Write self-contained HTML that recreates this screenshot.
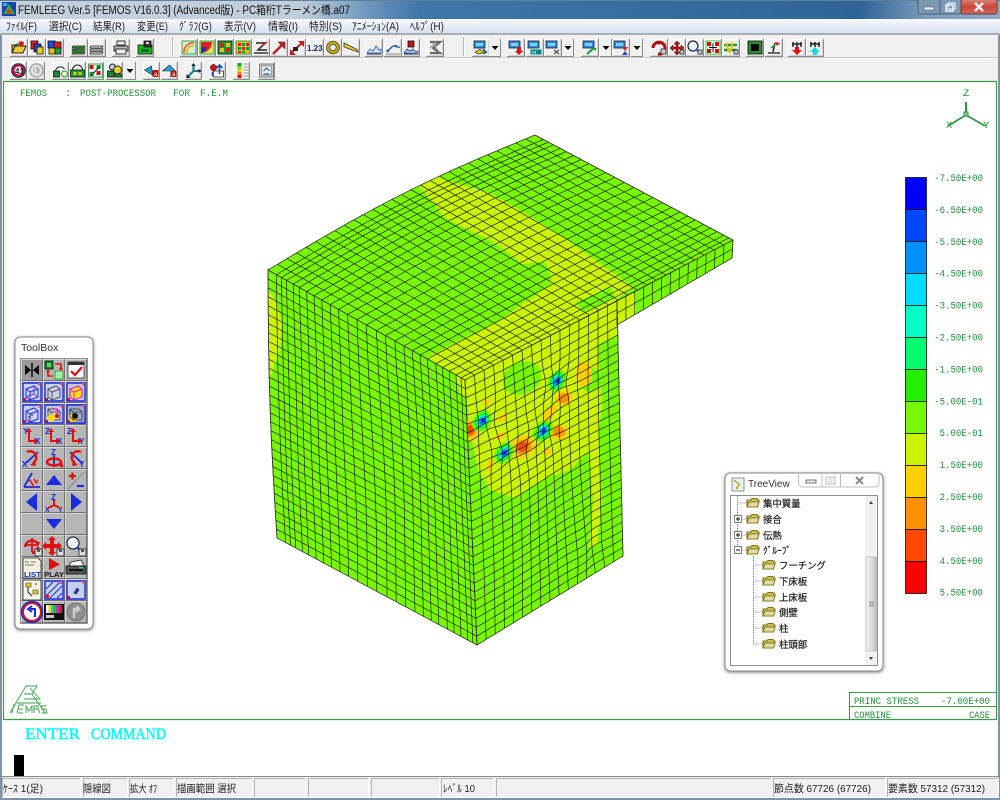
<!DOCTYPE html>
<html><head><meta charset="utf-8"><title>FEMLEEG</title>
<style>
html,body{margin:0;padding:0;background:#fff}
body{width:1000px;height:800px;overflow:hidden;position:relative}
svg{position:absolute;left:0;top:0;display:block}
text{font-family:"Liberation Sans","Noto Sans CJK JP",sans-serif}
.m{font-size:11px;fill:#222}
.g{font-family:"Liberation Mono",monospace;font-size:10.5px;fill:#23903a}
.s{font-size:10.5px;fill:#222}
.t{font-size:9.4px;fill:#222;stroke:#222;stroke-width:.22}
</style></head><body>
<svg width="1000" height="800" viewBox="0 0 1000 800" xmlns="http://www.w3.org/2000/svg">
<defs>
<linearGradient id="tb" x1="0" x2="1" y1="0" y2="0">
<stop offset="0" stop-color="#c3d0dc"/><stop offset=".3" stop-color="#c0cedb"/><stop offset=".37" stop-color="#6b95bc"/><stop offset=".42" stop-color="#3f75a9"/><stop offset=".86" stop-color="#2f6498"/><stop offset=".93" stop-color="#7f9fbd"/><stop offset="1" stop-color="#8ea9c2"/>
</linearGradient>
<linearGradient id="mn" x1="0" x2="0" y1="0" y2="1"><stop offset="0" stop-color="#f7f8fc"/><stop offset="1" stop-color="#d9e1f1"/></linearGradient>
<linearGradient id="cl" x1="0" x2="0" y1="0" y2="1"><stop offset="0" stop-color="#d98a80"/><stop offset=".5" stop-color="#c9463a"/><stop offset="1" stop-color="#cf6a5e"/></linearGradient>
<linearGradient id="sb" x1="0" x2="1" y1="0" y2="0"><stop offset="0" stop-color="#f4f4f4"/><stop offset=".5" stop-color="#dcdcdc"/><stop offset="1" stop-color="#bdbdbd"/></linearGradient>
<filter id="sh" x="-10%" y="-10%" width="120%" height="120%"><feDropShadow dx="0" dy="1" stdDeviation="1.5" flood-color="#000" flood-opacity=".5"/></filter>
</defs>

<!-- window frame -->
<rect width="1000" height="800" fill="#7f93a8"/>
<rect width="1000" height="19" fill="url(#tb)"/>
<rect x="0" y="0" width="1000" height="1" fill="#5f7f9f"/>
<rect x="2" y="2" width="14" height="14" fill="#1c3fa8"/>
<path d="M3 14L9 4l6 10z" fill="#2fae3c"/><path d="M6 13l3-5 3 5z" fill="#e33"/><path d="M3 3h4v3H3z" fill="#1fb6e8"/>
<text x="18" y="14" font-size="11.5" fill="#111" textLength="332" lengthAdjust="spacingAndGlyphs">FEMLEEG Ver.5 [FEMOS V16.0.3] (Advanced版) - PC箱桁Tラーメン橋.a07</text>
<!-- caption buttons -->
<rect x="918" y="-1" width="43" height="15" rx="2" fill="#7d98b3" stroke="#4a6078"/>
<path d="M940 0v14" stroke="#4a6078"/>
<rect x="961" y="-1" width="36" height="15" rx="2" fill="url(#cl)" stroke="#6a4040"/>
<rect x="924" y="7" width="10" height="3" fill="#e8eef4" stroke="#506070" stroke-width=".6"/>
<rect x="946" y="5" width="7" height="6" fill="none" stroke="#e8eef4" stroke-width="1.6"/><rect x="948" y="3" width="7" height="6" fill="none" stroke="#e8eef4" stroke-width="1.2"/>
<path d="M975 3l8 8M983 3l-8 8" stroke="#f4f4f4" stroke-width="2.4"/>

<!-- menu -->
<rect x="0" y="19" width="1000" height="14" fill="url(#mn)"/>
<rect x="0" y="33" width="1000" height="2" fill="#a9adb4"/>
<g>
<text class="m" x="6" y="30" textLength="31" lengthAdjust="spacingAndGlyphs">ﾌｧｲﾙ(F)</text>
<text class="m" x="49" y="30" textLength="33" lengthAdjust="spacingAndGlyphs">選択(C)</text>
<text class="m" x="93" y="30" textLength="32" lengthAdjust="spacingAndGlyphs">結果(R)</text>
<text class="m" x="137" y="30" textLength="31" lengthAdjust="spacingAndGlyphs">変更(E)</text>
<text class="m" x="179" y="30" textLength="33" lengthAdjust="spacingAndGlyphs">ｸﾞﾗﾌ(G)</text>
<text class="m" x="224" y="30" textLength="32" lengthAdjust="spacingAndGlyphs">表示(V)</text>
<text class="m" x="268" y="30" textLength="30" lengthAdjust="spacingAndGlyphs">情報(I)</text>
<text class="m" x="309" y="30" textLength="33" lengthAdjust="spacingAndGlyphs">特別(S)</text>
<text class="m" x="352" y="30" textLength="47" lengthAdjust="spacingAndGlyphs">ｱﾆﾒｰｼｮﾝ(A)</text>
<text class="m" x="410" y="30" textLength="34" lengthAdjust="spacingAndGlyphs">ﾍﾙﾌﾟ(H)</text>
</g>

<!-- toolbars -->
<rect x="2" y="35" width="996" height="46" fill="#f0f0f0"/>
<rect x="2" y="57" width="996" height="1" fill="#c6c6c6"/><rect x="2" y="58" width="996" height="1" fill="#fff"/>
<path d="M172.5 37v19M463.5 37v19" stroke="#bbb"/><path d="M173.5 37v19M464.5 37v19" stroke="#fff"/>
<g id="tools"></g>

<!-- canvas -->
<rect x="2" y="81" width="996" height="696" fill="#fff"/>
<path d="M3.5 81.5H996.5V719.5H3.5z" fill="none" stroke="#3f9a4c" stroke-width="1.2"/>
<g id="mesh"></g>
<text class="g" x="20" y="96" textLength="27" lengthAdjust="spacingAndGlyphs">FEMOS</text><text class="g" x="65" y="96">:</text>
<text class="g" x="80" y="96" textLength="76" lengthAdjust="spacingAndGlyphs">POST-PROCESSOR</text><text class="g" x="173" y="96" textLength="17" lengthAdjust="spacingAndGlyphs">FOR</text><text class="g" x="200" y="96" textLength="28" lengthAdjust="spacingAndGlyphs">F.E.M</text>

<!-- axis -->
<g stroke="#2a9a42" fill="none">
<path d="M966 102v14" stroke-width="2"/><path d="M966 115l-18 11M966 115l19 11" stroke-width="1.7"/>
<rect x="964" y="112" width="4" height="4" fill="#8fc79a"/>
</g>
<text class="g" x="963" y="96">Z</text><text class="g" x="946" y="128">X</text><text class="g" x="983" y="128">Y</text>

<!-- legend -->
<g id="leg"></g>

<!-- FEMOS logo -->
<g fill="none" stroke="#3aa04a" stroke-width=".9">
<path d="M10 713L26 686h11l-5 8h-8M30 688l10 11h-16M32 694l13 19M17 703h24M14 704l-2 9"/>
<path d="M17 713l2-8h5M18 709h5M18 713h5M26 713v-7l3 5 3-5v7M34 713v-7h4v3h-4M38 709l2 4M42 713h5l-1-4h-4l-1-3h5"/>
</g>

<!-- info box -->
<path d="M849.5 719V692.5H997M849.5 706.5H997" fill="none" stroke="#3f9a4c"/>
<text class="g" x="854" y="704" textLength="65" lengthAdjust="spacingAndGlyphs">PRINC STRESS</text><text class="g" x="941" y="704" textLength="49" lengthAdjust="spacingAndGlyphs">-7.00E+00</text>
<text class="g" x="854" y="718" textLength="37" lengthAdjust="spacingAndGlyphs">COMBINE</text><text class="g" x="969" y="718" textLength="21" lengthAdjust="spacingAndGlyphs">CASE</text>

<!-- command -->
<text x="25" y="739" font-size="15.5" fill="#00ffff" stroke="#00ffff" stroke-width=".5" style="font-family:'Liberation Serif',serif" textLength="55" lengthAdjust="spacingAndGlyphs">ENTER</text>
<text x="91" y="739" font-size="15.5" fill="#00ffff" stroke="#00ffff" stroke-width=".5" style="font-family:'Liberation Serif',serif" textLength="75" lengthAdjust="spacingAndGlyphs">COMMAND</text>
<rect x="14" y="755" width="10" height="21" fill="#000"/>

<!-- status -->
<rect x="0" y="776" width="1000" height="1.5" fill="#8a8a8a"/>
<rect x="2" y="777" width="996" height="21" fill="#f0f0f0"/>
<g id="stat"></g>
<text class="s" x="3" y="792" textLength="40" lengthAdjust="spacingAndGlyphs">ｹｰｽ 1(足)</text>
<text class="s" x="83" y="792" textLength="28" lengthAdjust="spacingAndGlyphs">隠線図</text>
<text class="s" x="130" y="792" textLength="27" lengthAdjust="spacingAndGlyphs">拡大 ｵﾌ</text>
<text class="s" x="177" y="792" textLength="59" lengthAdjust="spacingAndGlyphs">描画範囲 選択</text>
<text class="s" x="443" y="792" textLength="32" lengthAdjust="spacingAndGlyphs">ﾚﾍﾞﾙ 10</text>
<text class="s" x="774" y="792" textLength="97" lengthAdjust="spacingAndGlyphs">節点数 67726 (67726)</text>
<text class="s" x="888" y="792" textLength="97" lengthAdjust="spacingAndGlyphs">要素数 57312 (57312)</text>

<!-- toolbox -->
<rect x="15" y="337" width="78" height="292" rx="5" fill="#fff" stroke="#8a8a8a" filter="url(#sh)"/>
<text x="21" y="351" font-size="10.5" fill="#333">ToolBox</text>
<g id="box"></g>

<!-- tree view -->
<rect x="725" y="473" width="158" height="198" rx="5" fill="#fff" stroke="#8a8a8a" filter="url(#sh)"/>
<path d="M798.5 473v10a4 4 0 0 0 4 4H875a4 4 0 0 0 4-4V473M840.5 473v14M822 473v14" fill="none" stroke="#b8bcc2"/>
<rect x="806" y="480" width="10" height="3" fill="#eee" stroke="#555" stroke-width=".8"/>
<rect x="826" y="477" width="9" height="7" fill="none" stroke="#bbb"/><rect x="829" y="479" width="3" height="3" fill="none" stroke="#ccc"/>
<path d="M856 477l7 7M863 477l-7 7" stroke="#888" stroke-width="2"/>
<rect x="732" y="478" width="12" height="13" fill="#e8f4f4" stroke="#7a9a9a"/><path d="M735 481l4 3-2 4" stroke="#a08a10" fill="none"/><circle cx="735" cy="481" r="1.2" fill="#c8b020"/><circle cx="739" cy="484.500" r="1.2" fill="#c8b020"/><circle cx="737" cy="488" r="1.200" fill="#c8b020"/>
<text x="748" y="487" font-size="10" fill="#333">TreeView</text>
<rect x="730.500" y="495.500" width="147" height="170" fill="#fff" stroke="#8f8f8f"/>
<rect x="865" y="496" width="12" height="169" fill="#f0f0f0"/>
<rect x="866" y="557" width="11" height="94" rx="1" fill="url(#sb)" stroke="#aaa" stroke-width=".6"/>
<path d="M869 602h5M869 604h5M869 606h5" stroke="#777" stroke-width=".8"/>
<path d="M871 501l-2 3h4zM871 660l-2-3h4z" fill="#444"/>
<g id="tree"></g>
<text class="t" x="763" y="507">集中質量</text>
<text class="t" x="763" y="523">接合</text>
<text class="t" x="763" y="539">伝熱</text>
<text class="t" x="763" y="554">ｸﾞﾙｰﾌﾟ</text>
<text class="t" x="779" y="569">フーチング</text>
<text class="t" x="779" y="585">下床板</text>
<text class="t" x="779" y="601">上床板</text>
<text class="t" x="779" y="616">側壁</text>
<text class="t" x="779" y="632">柱</text>
<text class="t" x="779" y="648">柱頭部</text>
</svg>
<script>
(function(){
var $=function(id){return document.getElementById(id)};
/* ---------- primitives ---------- */
function R(x,y,w,h,f,s){return '<rect x="'+x+'" y="'+y+'" width="'+w+'" height="'+h+'" fill="'+f+'"'+(s?' stroke="'+s+'" stroke-width=".8"':'')+'/>'}
function P(d,f,s,w){return '<path d="'+d+'" fill="'+(f||'none')+'"'+(s?' stroke="'+s+'" stroke-width="'+(w||1)+'"':'')+'/>'}
function C(x,y,r,f,s,w){return '<circle cx="'+x+'" cy="'+y+'" r="'+r+'" fill="'+(f||'none')+'"'+(s?' stroke="'+s+'" stroke-width="'+(w||1)+'"':'')+'/>'}

/* ---------- toolbar icons (16x15 box) ---------- */
var blueScr=R(1,1,11,7,'#2f8be0','#123')+R(3,3,7,3,'#7fd0ff');
var stack=function(c){return P('M2 6h12l-1 2H1zM2 9h12l-1 2H1zM2 12h12l-1 2H1z',c,'#222',.8)};
var I={
open:P('M1 13V5h4l1-1h6v2',"#d8b020",'#222')+P('M1 13l3-7h11l-3 7z','#f0c830','#222')+P('M8 1l5 1-1 4-3 0z','#d01818'),
pg:R(2,1,7,8,'#e02020','#111')+R(5,4,7,8,'#2040d0','#111')+R(8,7,6,7,'#e8d020','#111'),
pg2:R(1,1,7,7,'#2050e0','#111')+R(7,2,7,6,'#e02020','#111')+R(2,8,6,6,'#e8c020','#111')+R(8,8,6,6,'#20a040','#111'),
st1:stack('#28b028'),st2:stack('#e0e0e0'),
pr:P('M4 1h8v4H4z','#eee','#333')+P('M1 6h14v5H1z','#bbb','#333')+P('M3 9h10v5H3z','#eee','#333'),
sv:R(1,5,14,9,'#10c010','#111')+R(7,1,7,6,'#333','#111')+R(9,2,3,2,'#ddd')+R(4,9,8,3,'#063'),
c1:R(1,1,14,13,'#d8ecd0','#1a8a30')+P('M3 13a9 9 0 0 1 10-10','none','#e06020',1.6)+P('M6 13a6 6 0 0 1 7-7','none','#e8b020',1.6),
c2:R(1,1,14,13,'#d8e860','#1a8a30')+P('M2 13V2h11a11 11 0 0 1-11 11z','#e02020')+P('M2 13V7h5a5 5 0 0 1-5 6z','#2030c0'),
c3:R(1,1,14,13,'#10a030','#111')+R(3,3,4,4,'#e02020')+R(9,3,4,4,'#e8c020')+R(3,8,4,4,'#e8c020')+R(9,8,4,4,'#e02020'),
c4:R(1,1,14,13,'#e8c020','#1a8a30')+R(3,3,3,3,'#e02020')+R(7,3,3,3,'#10a030')+R(11,3,3,3,'#e02020')+R(3,7,3,3,'#10a030')+R(7,7,3,3,'#e02020')+R(11,7,3,3,'#10a030')+R(3,11,3,2,'#e02020')+R(7,11,3,2,'#10a030'),
zz:P('M3 3h9L5 10h9','none','#222',1.5)+P('M1 13h14','none','#333',1.5)+P('M9 6l5-4','none','#c02020',1.5),
ar:P('M2 14L12 4','none','#c02020',2.4)+P('M7 2h7v7z','#c02020','#222',.5),
ar2:P('M2 13L14 2','none','#c02020',2)+R(4,7,5,4,'#222')+P('M9 1h6v6zM1 9v6h6z','#c02020'),
n123:'<text x="0" y="11" font-size="8" font-weight="bold" fill="#1a2a70">1.23</text>',
ring:C(8,7.500,5,'none','#b8a810',3)+C(8,7.500,6.500,'none','#222',.6)+C(8,7.500,3.200,'none','#222',.6),
horn:P('M1 3L15 10v2L1 7z','#e8d030','#333',.8),
g1:P('M1 13l3-4 3 2 3-5 3 4 2-1v4z','#cfe0f0','#3060b0',.8)+P('M1 14h14','none','#333'),
g2:P('M1 11c4 0 5-5 8-5s3 2 6 1','none','#3060a0',1.4)+C(3,11,1.300,'#3060a0')+C(11,6,1.300,'#3060a0')+P('M1 14h14','none','#888'),
g3:R(5,1,6,6,'#c01818','#111')+P('M1 13l3-4 3 2 3-2 3 3 2-1v3z','#9ab8e0','#2050a0',.8)+P('M1 14h14','none','#333'),
ss:P('M3 2h10L6 8l7 5H3','none','#666',2.200)+P('M5 2l8 11M9 2L3 8','none','#999',1),
sc:blueScr+P('M2 12l5-3 3 4-5 1z','#e8c820','#222',.6)+P('M10 9l4 3-3 2z','#20a040','#222',.6),
scd:blueScr+P('M9 7h4v4h2l-4 4-4-4h2z','#e01010'),
scm:blueScr+P('M4 10h10v4H4z','#088','#088')+'<text x="5" y="14" font-size="5" fill="#fff">m</text>',
scl:blueScr+P('M9 10l5 4M14 10l-5 4','none','#555',1.400),
scg:blueScr+P('M5 14L12 8','none','#1a9a30',2)+P('M10 8h4v3z','#1a9a30'),
scr:blueScr+P('M9 7h6l-3 4 3 4H9l3-4z','#1850c0')+P('M9 7h6l-3 4z','#e02020'),
ro:P('M2 8a6 6 0 1 1 5 6','none','#b01010',3)+P('M4 3l4-2 1 4z','#b01010')+R(10,9,5,5,'#ccc','#222'),
mv:P('M8 1l3 3H9v3h3V5l3 3-3 3V9H9v3h2l-3 3-3-3h2V9H4v2L1 8l3-3v2h3V4H5z','#c01010','#311',.5)+R(11,10,4,4,'#ccc','#222'),
mg:C(6,6,5,'#e8f0ff','#222',1.200)+P('M9 9l3 3','none','#2060c0',2)+R(11,10,4,4,'#ccc','#222'),
fit:R(1,1,14,13,'#fff','#10c010')+R(2,2,4,4,'#d01010')+R(10,2,4,4,'#d01010')+R(2,9,4,4,'#d01010')+R(10,9,4,4,'#d01010')+P('M8 3v9M4 7.500h8','none','#111'),
sel:P('M1 5h13M1 10h13','none','#1a9a30',2.600)+P('M3 3l3 9M10 2l-3 11','none','#e8c020',2)+R(11,10,4,4,'#ccc','#222'),
blk:R(1,1,14,13,'#2a8a30','#111')+R(4,4,8,7,'#000'),
flg:P('M7 12L9 3','none','#222',1.500)+P('M9 2l5 1-3 3z','#d01818')+P('M2 13h12','none','#666',2)+P('M5 8l4-3','none','#1a9a30',1.500),
upd:P('M3 4h10M4 2v5M8 2v5M12 2v5','none','#222',1.500)+P('M6 7h4v3h3l-5 5-5-5h3z','#e01010'),
upc:P('M3 4h10M4 2v5M8 2v5M12 2v5','none','#222',1.500)+P('M6 15h4v-3h3L8 7l-5 5h3z','#10d8e8'),
a41:C(8,7.500,7,'#2838c0','#111',.6)+C(8,7.500,5,'#fff','#d01010',2)+'<text x="4.500" y="11" font-size="8" font-weight="bold" fill="#223">41</text>',
gp:C(8,7.500,7,'#b8b8b8','#999',.6)+C(8,7.500,4.500,'none','#e4e4e4',2)+P('M7 5v6','none','#e4e4e4',1.600),
h1:P('M3 8a5 5 0 0 1 9-2','none','#222')+R(1,8,6,6,'#1a8a30','#111')+C(12,11,3,'#e8ffe0','#1a9a30'),
h2:P('M3 7a5 5 0 0 1 10 0','none','#222')+R(1,7,14,7,'#10a030','#111')+R(4,9,3,3,'#e8c020')+R(9,9,3,3,'#e8c020'),
h3:R(1,1,14,13,'#eee','#1a8a30')+R(2,2,4,4,'#d01010')+R(9,8,4,4,'#d01010')+R(2,9,4,4,'#10a030')+R(9,2,4,4,'#10a030')+P('M3 13L13 3','none','#222'),
h4:C(6,4,3,'#ccc','#222')+R(1,8,6,6,'#1a8a30','#111')+C(11,7,4,'#e8d020','#222')+R(8,11,7,3,'#1a8a30','#111'),
c5:P('M1 7l7-4 1 9z','#18a8d8','#222',.6)+P('M9 7h6v7H9z','#c01010')+'<text x="10.500" y="13" font-size="6" fill="#fff">a</text>',
c6:P('M1 8l7-6 6 6z','#18a8d8','#222',.6)+P('M9 8h6v6H9z','#c01010')+'<text x="10.500" y="13" font-size="6" fill="#fff">a</text>',
axs:P('M8 8V1M8 8L2 14M8 8h7','none','#1a7a80',2)+P('M6 3l2-3 2 3zM13 6l3 2-3 2zM1 11l0 4 4 0z','#114'),
hm:R(4,8,10,6,'#fff','#333')+P('M1 3l3-2 3 2 0 3-3 3-3-3z','#d01010','#222',.5)+P('M10 11V3M7 5l3-3 3 3','none','#1050c0',1.600)+P('M3 13v-4','none','#1050c0',1.500),
lg:R(4,0,4,3,'#10a030')+R(4,3,4,3,'#70e010')+R(4,6,4,3,'#e8d020')+R(4,9,4,3,'#f08010')+R(4,12,4,3,'#e01010')+P('M10 1h5M10 4h5M10 7h5M10 10h5M10 13h5','none','#999'),
gs:R(1,1,14,13,'#ccc','#666')+R(3,3,10,9,'#eee','#888')+P('M5 8l3-3 3 3M5 11h6','none','#3070b0',1.300)
};
var b=[];
function btn(x,w,y,k){
  b.push('<g transform="translate('+x+','+y+')">'+R(0,0,w,18,'#f0f0f0')+P('M.5 17V.5H'+(w-.5),'none','#fff')+P('M0 17.500H'+w+'M'+(w-.5)+' 0V18','none','#8c8c8c')+P('M1 16.500H'+(w-1.5)+'V1','none','#d2d2d2')+'<g transform="translate('+(w/2-8)+',1)">'+(I[k]||'')+'</g></g>');
}
function dd(x,y){b.push('<g transform="translate('+x+','+y+')">'+R(0,0,12,18,'#f0f0f0')+P('M0 17.500H12M11.500 0V18','none','#8c8c8c')+P('M2.500 7h7L6 11z','#000')+'</g>')}
[[10,'open'],[28,'pg'],[46,'pg2'],[70,'st1'],[88,'st2'],[112,'pr'],[136,'sv'],[180,'c1'],[198,'c2'],[216,'c3'],[234,'c4'],[252,'zz'],[270,'ar'],[288,'ar2'],[306,'n123'],[324,'ring'],[342,'horn'],[365,'g1'],[384,'g2'],[402,'g3'],[426,'ss'],[472,'sc'],[507,'scd'],[526,'scm'],[544,'scl'],[581,'scg'],[612,'scr'],[650,'ro'],[668,'mv'],[686,'mg'],[704,'fit'],[722,'sel'],[746,'blk'],[765,'flg'],[788,'upd'],[806,'upc']].forEach(function(a){btn(a[0],18,39,a[1])});
[489,562,600,631].forEach(function(x){dd(x,39)});
[[10,'a41'],[28,'gp'],[52,'h1'],[69,'h2'],[87,'h3'],[106,'h4'],[143,'c5'],[161,'c6'],[185,'axs'],[209,'hm'],[233,'lg'],[258,'gs']].forEach(function(a){btn(a[0],17,62,a[1])});
dd(124,62);
$('tools').innerHTML=b.join('');

/* ---------- status panels ---------- */
var st='';[[2,80],[83,127],[129,173],[176,252],[254,305],[308,368],[371,439],[441,493],[496,771],[773,885],[887,998]].forEach(function(a){
 st+=P('M'+(a[0]+.5)+' 797V778.500H'+a[1],'none','#b4b4b4')+P('M'+a[1]+'.5 778V797.500H'+a[0],'none','#fff');});
$('stat').innerHTML=st;

/* ---------- legend ---------- */
var cols=['#0000ff','#0048ff','#0090ff','#00dcff','#00ffc4','#00ff70','#22ee00','#78f800','#ccf400','#ffd000','#ff9000','#ff4800','#ff0000'];
var labs=['-7.50E+00','-6.50E+00','-5.50E+00','-4.50E+00','-3.50E+00','-2.50E+00','-1.50E+00','-5.00E-01','5.00E-01','1.50E+00','2.50E+00','3.50E+00','4.50E+00','5.50E+00'];
var lg='';
cols.forEach(function(c,i){lg+=R(905.5,177.5+i*32,21,32,c,'#111')});
labs.forEach(function(t,i){var w=t.length*5.42;lg+='<text class="g" x="'+(983-w)+'" y="'+(181+i*31.9)+'" textLength="'+w+'" lengthAdjust="spacingAndGlyphs">'+t+'</text>'});
$('leg').innerHTML=lg;

/* ---------- mesh ---------- */
var A=[268,270],B=[535,135],Cc=[733,240],F=[465,380],G=[477,645],H=[277,538],T=[617,301],Rr=[623,556];
function bil(p,u,v){var a=(1-u)*(1-v),b=u*(1-v),c=u*v,d=(1-u)*v;return [a*p[0][0]+b*p[1][0]+c*p[2][0]+d*p[3][0],a*p[0][1]+b*p[1][1]+c*p[2][1]+d*p[3][1]]}
var vs=[25,50,65,80,100,118,140,162,185,210,235,262,290,318,348,375,403,430,455,478,500,525,545,565,585,600,612].map(function(z){return (z-25)/587});
function top_(u,v){var q=bil([A,B,Cc,F],u,v);q[1]-=8*Math.sin(Math.PI*u)*(1-v);return q}
function left_(u,v){var q=bil([A,F,G,H],u,v);
 q[0]+=-2.5*Math.sin(Math.PI*v)*(1-u)+3*Math.sin(Math.PI*v)*Math.sin(Math.PI*u);
 q[0]+=1.2*Math.sin(u*9+v*4)*Math.sin(Math.PI*v)*Math.sin(Math.PI*u);return q}
var hots=[[557,381,.55,11],[482,421,.55,11],[504,453,.55,11],[543,431,.55,11],[522,446,.2,9]];
function right_(u,v){var q=bil([F,T,Rr,G],u,v);
 var ox=q[0],oy=q[1],eb=Math.min(1,u*7)*Math.min(1,(1-u)*7);
 hots.forEach(function(h){var dx=h[0]-ox,dy=h[1]-oy,e=Math.exp(-(dx*dx+dy*dy)/(2*h[3]*h[3]))*eb;q[0]+=dx*h[2]*e;q[1]+=dy*h[2]*e});
 q[0]+=4*Math.sin(Math.PI*u*2)*Math.sin(Math.PI*v)*.8;
 q[1]+=4*Math.sin(Math.PI*v*3)*Math.sin(Math.PI*u)*Math.max(0,.8-v);
 var fd=ox-590,w=Math.exp(-fd*fd/150)*Math.max(0,(oy-470)/85);q[0]-=fd*.55*Math.min(w,1)*Math.min(1,(1-v)*10);
 return q}
var sl0=[617,301],sl1=[733,240],sl2=[732,258],sl3=[617,325];
function slab(u,v){return bil([sl0,sl1,sl2,sl3],u,v)}
function fmt(q){return q[0].toFixed(1)+' '+q[1].toFixed(1)}
function lines(fn,us,vv){var d='';
 us.forEach(function(u){var s=[];for(var k=0;k<=40;k++){s.push(fmt(fn(u,k/40)))}d+='M'+s.join('L')});
 vv.forEach(function(v){var s=[];for(var k=0;k<=60;k++){s.push(fmt(fn(k/60,v)))}d+='M'+s.join('L')});
 return d}
function outline(fn,n){var s=[],i;for(i=0;i<=n;i++)s.push(fmt(fn(i/n,0)));for(i=0;i<=n;i++)s.push(fmt(fn(1,i/n)));for(i=n;i>=0;i--)s.push(fmt(fn(i/n,1)));for(i=n;i>=0;i--)s.push(fmt(fn(0,i/n)));return 'M'+s.join('L')+'z'}
function lin(n){var a=[];for(var i=0;i<=n;i++)a.push(i/n);return a}
var oT=outline(top_,60),oL=outline(left_,60),oR=outline(right_,80),oS=outline(slab,20);
var Y='#ccf400',GR='#78f800',O='#ffd000',OR='#ff9000',RD='#ff4800';
function E(x,y,rx,ry,f,rot){return '<ellipse cx="'+x+'" cy="'+y+'" rx="'+rx+'" ry="'+ry+'" fill="'+f+'"'+(rot?' transform="rotate('+rot+' '+x+' '+y+')"':'')+'/>'}
function blue(x,y,rot,s){s=s||1;return E(x,y,13*s,10*s,GR,rot)+E(x,y,10*s,7*s,'#22ee00',rot)+E(x,y,8.500*s,5.800*s,'#00ff70',rot)+E(x,y,7.500*s,5*s,'#00ffc4',rot)+E(x,y,6.500*s,4.500*s,'#00dcff',rot)+E(x+.5,y,4.500*s,3.400*s,'#0090ff',rot)+E(x+1,y,2.600*s,2.200*s,'#0030ff',rot)}
function hot(x,y,r,ro){var s=E(x,y,r*1.300,r*1.100,O,ro);if(r>5)s+=E(x,y,r*.85,r*.7,OR,ro);if(r>8)s+=E(x,y,r*.55,r*.45,RD,ro);return s}
var m='<clipPath id="ct"><path d="'+oT+'"/></clipPath><clipPath id="cl_"><path d="'+oL+'"/></clipPath><clipPath id="cr"><path d="'+oR+'"/></clipPath><clipPath id="cs"><path d="'+oS+'"/></clipPath>';
/* top */
m+='<path d="'+oT+'" fill="'+GR+'"/><g clip-path="url(#ct)">'
 +P('M420 187L437 177L490 193L520 210L563 237L633 287L600 312L465 384L427 357L500 320L528 300L552 284L520 262L495 243L445 218z',Y)
 +P('M522 264L545 262L552 280L530 290z',GR)+P('M575 303L610 287L615 297L585 312z',GR)
 +'</g>';
/* left */
m+='<path d="'+oL+'" fill="'+GR+'"/><g clip-path="url(#cl_)">'
 +P('M262 293L272 293L282 320L280 350L270 378z',Y)
 +P('M455 372L470 382L470 405L460 392z',Y)
 +'</g>';
/* right */
m+='<path d="'+oR+'" fill="'+GR+'"/><g clip-path="url(#cr)">'
 +P('M465 380L617 301L617 335L598 345L602 405L598 440L570 470L545 478L515 498L490 490L478 470L470 430z',Y)
 +E(522,378,20,16,GR,-25)
 +E(590,380,11,12,GR,0)
 +P('M586 430L598 425L602 500L597 545L589 548L593 500z',Y)
 +E(584,374,8,13,O,0)
 +hot(564,398,7,-20)+E(550,413,10,4.500,O,-50)
 +hot(559,432,7,0)+hot(523,447,10,-30)+hot(470,430,9,-65)
 +E(487,402,4,3,O,-40)+E(502,418,6,3.500,O,-30)+E(500,436,6,3.500,O,-30)+E(490,465,3.500,6,O,20)+E(548,452,5,3.500,O,0)
 +blue(557,381,-60,.9)+blue(482,421,-55,.9)+blue(504,453,-55,.9)+blue(543,431,-50,.9)
 +'</g>';
/* slab front */
m+='<path d="'+oS+'" fill="'+GR+'"/><g clip-path="url(#cs)">'+P('M617 301L636 290L636 316L617 325z',Y)+'</g>';
/* grid */
function grid(d){return '<path d="'+d+'" fill="none" stroke="#1c2800" stroke-width=".7" stroke-linejoin="round"/>'}
m+=grid(lines(top_,lin(28),vs.slice(1,-1)));
m+=grid(lines(left_,vs,lin(30).slice(1,-1)));
m+=grid(lines(right_,lin(16),lin(30).slice(1,-1)));
m+=grid(lines(slab,lin(13),[.5]));
m+='<path d="'+oT+oL+oR+oS+'" fill="none" stroke="#333a30" stroke-width=".8"/>';
$('mesh').innerHTML=m;

/* ---------- toolbox ---------- */
function cell(c,r,art,dark){var x=21+22*c,y=359+22*r;
 return '<g transform="translate('+x+','+y+')">'+R(0,0,22,22,dark||'#b6b6b6')+P('M.5 21.500V.5H21.500','none','#d6d6d6')+P('M.5 21.500H21.500V.5','none','#747474')+art+'</g>'}
var BL='#1a2ae0',RE='#e01010';
var frame=P('M2 2h18v18H2z','none',BL,1.400)+R(17,2,2.500,2.500,'#f06060')+R(2.500,17,2.500,2.500,RE);
function L(x,y,t,a){return '<text x="'+x+'" y="'+y+'" font-size="'+(a||8)+'" font-weight="bold" fill="'+BL+'" style="font-family:Liberation Sans,sans-serif">'+t+'</text>'}
function axes(a,c){return L(2,9,a)+L(14,19,c)+P('M8 5v11h7','none',RE,2)+P('M5 7l3-4 3 4zM13 13l4 3-4 3z',RE)}
var cubeP=P('M5 8l8-3 4 3v8l-8 3-4-3zM5 8l4 3 8-3M9 11v8','none','#2a2ae0',1);
var cubeD=P('M5 6h9l3 3v8H8l-3-3zM5 6l3 3h9M8 9v8M5 14l3 3','none','#333',.8);
var tb='';
tb+=cell(0,0,P('M4 6l6 5-6 5zM18 6l-6 5 6 5z','#000')+P('M11 4v14','none','#000',1.400),'#9a9a9a');
tb+=cell(1,0,R(2,2,8,8,'#108a20','#111')+R(4,4,4,4,'#60d060')+R(12,12,8,8,'#a0f0a0','#1a9a30')+P('M12 5h6v5M10 17H5v-5','none',RE,1.600)+P('M16 9l2 3 2-3zM3 13l2-3 2 3z',RE));
tb+=cell(2,0,R(3,3,16,16,'#fff','#333')+R(3,3,16,3,'#333')+P('M6 12l4 4 7-8','none',RE,2.200));
tb+=cell(0,1,R(2,2,18,18,'#c8cfe8')+frame+cubeP+P('M5 16l8-3 4 3M13 5v8','none','#2a2ae0',.7));
tb+=cell(1,1,R(2,2,18,18,'#c8cfe8')+frame+P('M5 8l8-3 4 3v8l-8 3-4-3zM5 8l4 3 8-3M9 11v8','none','#555',1));
tb+=cell(2,1,R(2,2,18,18,'#c8c8d8')+frame+P('M5 8l8-3 4 3v8l-8 3-4-3z','#ffe000','#e020e0',1.200)+P('M5 8l4 3 8-3M9 11v8','none','#e020e0',1));
tb+=cell(0,2,R(2,2,18,18,'#c8cfe8')+frame+cubeP+C(11,12,.8,'#222')+C(8,14,.8,'#222'));
tb+=cell(1,2,R(2,2,18,18,'#c8c8d8')+frame+cubeD+P('M4 14l6-4 3 6-5 3z','#ffe000')+P('M9 5l7 3-3 4','none','#e020e0',1.200)+C(14,13,2,RE));
tb+=cell(2,2,R(2,2,18,18,'#a0a8c8')+frame+P('M3 12l8-2 2 8-8 1z','#ffe000')+cubeD+C(10,13,3,'#111'),'#8a8a9a');
tb+=cell(0,3,axes('Y','X'))+cell(1,3,axes('Z','X'))+cell(2,3,axes('Z','Y'));
tb+=cell(0,4,L(1,20,'X')+P('M5 16l12-11','none',BL,1.800)+P('M6 5a6 6 0 1 1 6 11','none',RE,2.400)+P('M9 18l5-4 1 5z',RE));
tb+=cell(1,4,L(8,8,'Z')+P('M11 8v12','none',BL,1.800)+'<ellipse cx="11" cy="15" rx="7" ry="3.500" fill="none" stroke="'+RE+'" stroke-width="2.400"/>'+P('M16 19l4-3 0 5z',RE));
tb+=cell(2,4,L(14,20,'Y')+P('M5 5l12 11','none',BL,1.800)+P('M16 5a6 6 0 1 0-6 11','none',RE,2.400)+P('M13 18l-5-4-1 5z',RE));
tb+=cell(0,5,P('M3 18L11 4M3 18h16','none',BL,1.800)+P('M12 18a9 9 0 0 0-4-7','none',RE,1.600)+P('M13 10l2 4 2-3','none',RE,1.300));
tb+=cell(1,5,P('M11 6l8 10H3z',BL));
tb+=cell(2,5,P('M3 20L19 3','none','#8a8a8a',1)+P('M4 7h7M7.500 3.500v7','none',RE,2.200)+P('M12 17h7','none',BL,2.200));
tb+=cell(0,6,P('M16 2v18L5 11z',BL));
tb+=cell(1,6,L(8,9,'Z')+L(2,21,'X',7)+L(15,21,'Y',7)+P('M11 9v5M11 14l-6 3M11 14l6 3','none',RE,2));
tb+=cell(2,6,P('M6 2v18l11-9z',BL));
tb+=cell(0,7,'')+cell(1,7,P('M3 6h16l-8 10z',BL))+cell(2,7,'');
tb+=cell(0,8,P('M4 12a7 7 0 0 1 13-3M17 12a7 7 0 0 1-6 6','none',RE,2.400)+P('M11 3v14M4 10h13','none',RE,1.800)+P('M14 7l5 0-2 5z',RE)+R(14,14,7,7,'#ddd','#222')+R(16,14,3,3,'#555'));
tb+=cell(1,8,P('M9 1l4 4h-2v4h4V7l4 4-4 4v-2h-4v4h2l-4 4-4-4h2v-4H3v2l-4-4 4-4v2h4V5H5z',RE)+R(14,14,7,7,'#ddd','#222')+R(16,14,3,3,'#555'));
tb+=cell(2,8,C(8,8,6,'#eef3ff','#333',1.300)+P('M12 12l4 4','none','#1a50c0',2.400)+R(14,14,7,7,'#ddd','#222')+R(16,14,3,3,'#555'));
tb+=cell(0,9,P('M2 1h15l3 3v17H2z','#f0efe0','#222',.8)+P('M4 5h4M10 5h5M4 8h9','none','#777',1)+'<text x="3" y="20" font-size="7" font-weight="bold" fill="#1030c0" textLength="17" lengthAdjust="spacingAndGlyphs">LIST</text>');
tb+=cell(1,9,P('M6 1l11 6.500L6 13z',RE)+'<text x="1" y="20" font-size="7" font-weight="bold" fill="#111" textLength="20" lengthAdjust="spacingAndGlyphs">PLAY</text>');
tb+=cell(2,9,P('M6 5l10-2 3 6H4z','#f4f4f4','#222',.8)+R(1,9,20,8,'#555','#111')+R(4,12,14,2,'#111')+R(14,10,4,1.500,'#2ad0e0'));
tb+=cell(0,10,R(2,1,18,20,'#f4f4e8','#222')+P('M5 4h5v4H5zM12 11h5v4h-5z','#e8d020','#333',.6)+P('M7 8l0 5 4 4','none','#222',1)+C(15,5,.8,'#222'));
tb+=cell(1,10,R(2,2,18,18,'#c8cfe8')+P('M3 10l7-7M3 17L17 3M7 19L19 7M14 19l5-5','none','#333fb0',1.200)+P('M2 2h18v18H2z','none',BL,1.400)+R(16,2,3,3,'#f06060')+R(3,16,3,3,RE));
tb+=cell(2,10,R(2,2,18,18,'#c8cfe8')+frame+P('M9 14l3-5 2 2-3 4z','#2a3ad0','#114',.6));
tb+=cell(0,11,C(11,11,9.500,'#fff',RE,3)+C(11,11,10.500,'none',BL,1.400)+P('M14 16V8h-5M11 5L7 8l4 3','none',BL,2));
tb+=cell(1,11,R(1,3,20,16,'#111')+R(3,4,2.600,8,'#fff')+R(5.600,4,2.600,8,'#e8e020')+R(8.200,4,2.600,8,'#20d8e0')+R(10.800,4,2.600,8,'#20c020')+R(13.400,4,2.600,8,'#e020d0')+R(16,4,3,8,'#e02020')+R(3,14,8,3,'#ccc'));
tb+=cell(2,11,C(11,11,9,'#8f8f8f','#777')+P('M9 17v-9h5l-2-3M14 8l-3 3','none','#cfcfcf',2.400));
$('box').innerHTML=R(20.500,358.500,67,265,'none','#777')+tb;

/* ---------- tree ---------- */
function folder(x,y){return P('M'+(x-6)+' '+(y+4)+'V'+(y-3)+'h4l1-1.500h5l1 1.500h1v2',"#c8bf60",'#7d7410',1.100)+P('M'+(x-6)+' '+(y+4)+'l2-5h10l-1.500 5z','#e0dcb0','#8a8010',1.100)}
var tr='',rows=[[503,0],[519,0,'+'],[535,0,'+'],[550,0,'-'],[565,1],[581,1],[597,1],[612,1],[628,1],[644,1]];
tr+='<path d="M737.500 496V550M753.500 556V644M737.500 503H747M737.500 519H747M737.500 535H747M737.500 550H747M753.500 565H763M753.500 581H763M753.500 597H763M753.500 612H763M753.500 628H763M753.500 644H763" fill="none" stroke="#888" stroke-dasharray="1 1"/>';
rows.forEach(function(r){var x=r[1]?769:753;tr+=folder(x,r[0]);
 if(r[2]){tr+=R(734.500,r[0]-3.500,7,7,'#fff','#666')+P('M736 '+(r[0])+'h4','none','#111');if(r[2]=='+')tr+=P('M738 '+(r[0]-2)+'v4','none','#111')}});
$('tree').innerHTML=tr;
})();
</script>
</body></html>
